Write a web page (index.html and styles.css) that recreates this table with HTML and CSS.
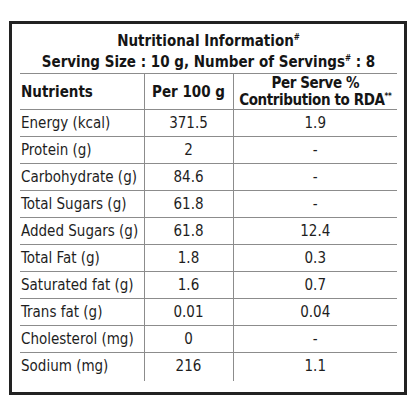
FILE: index.html
```html
<!DOCTYPE html>
<html lang="en">
<head>
    <meta charset="UTF-8">
    <title>Nutritional Information</title>
    <link rel="stylesheet" href="styles.css">
</head>
<body>
<div class="label">
    <div class="title">
        Nutritional Information<sup>#</sup><br>
        Serving Size : 10 g, Number of Servings<sup>#</sup> : 8
    </div>
    <table class="facts">
        <colgroup>
            <col class="c1">
            <col class="c2">
            <col class="c3">
        </colgroup>
        <thead>
        <tr>
            <th class="name">Nutrients</th>
            <th>Per 100 g</th>
            <th class="rda">Per Serve %<br>Contribution to RDA<sup>**</sup></th>
        </tr>
        </thead>
        <tbody>
        <tr><td class="name">Energy (kcal)</td><td>371.5</td><td>1.9</td></tr>
        <tr><td class="name">Protein (g)</td><td>2</td><td>-</td></tr>
        <tr><td class="name">Carbohydrate (g)</td><td>84.6</td><td>-</td></tr>
        <tr><td class="name">Total Sugars (g)</td><td>61.8</td><td>-</td></tr>
        <tr><td class="name">Added Sugars (g)</td><td>61.8</td><td>12.4</td></tr>
        <tr><td class="name">Total Fat (g)</td><td>1.8</td><td>0.3</td></tr>
        <tr><td class="name">Saturated fat (g)</td><td>1.6</td><td>0.7</td></tr>
        <tr><td class="name">Trans fat (g)</td><td>0.01</td><td>0.04</td></tr>
        <tr><td class="name">Cholesterol (mg)</td><td>0</td><td>-</td></tr>
        <tr class="last"><td class="name">Sodium (mg)</td><td>216</td><td>1.1</td></tr>
        </tbody>
    </table>
</div>
</body>
</html>
```
FILE: styles.css
```css
*{
    padding: 0;
    margin: 0;
}
body{
    background: #fff;
    color: #1e1e1e;
    font-family: "DejaVu Sans Condensed", "Liberation Sans Narrow", Roboto, sans-serif;
}
.label{
    width: 377px;
    margin: 21px 0 0 9px;
    border: 3px solid #222;
    padding: 7px 7px 11px 8px;
}
.title{
    text-align: center;
    font-weight: bold;
    font-size: 15px;
    line-height: 21px;
    white-space: nowrap;
    color: #151515;
}
sup{
    font-size: 8px;
    vertical-align: 6px;
    line-height: 0;
}
.facts{
    width: 100%;
    table-layout: fixed;
    border-collapse: collapse;
    font-size: 15px;
    white-space: nowrap;
}
.facts .c1{
    width: 124px;
}
.facts .c2{
    width: 89px;
}
.facts th,
.facts td{
    border-top: 1px solid #8c8c8c;
    border-left: 1px solid #8c8c8c;
    text-align: center;
    font-weight: normal;
    height: 26px;
    line-height: 20px;
}
.facts th{
    font-weight: bold;
    height: 35px;
    color: #151515;
}
.facts .rda{
    line-height: 17px;
    letter-spacing: -0.4px;
}
.facts .name{
    text-align: left;
    border-left: none;
    padding-left: 1px;
}
.facts .last td{
    padding-bottom: 2px;
}
```
